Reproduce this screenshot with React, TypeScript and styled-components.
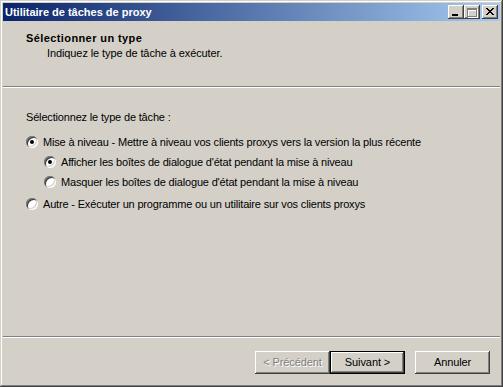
import React from 'react'
import styled, { createGlobalStyle } from 'styled-components'

const GlobalStyle = createGlobalStyle`
  html, body {
    margin: 0;
    padding: 0;
    background: #d4d0c8;
  }
  body {
    font-family: "Liberation Sans", Tahoma, Arial, sans-serif;
    font-size: 11px;
    color: #000;
  }
`

const Window = styled.div`
  box-sizing: border-box;
  width: 503px;
  height: 387px;
  padding: 3px;
  display: flex;
  flex-direction: column;
  background: #d4d0c8;
  box-shadow:
    inset -1px -1px #404040,
    inset 1px 1px #d4d0c8,
    inset -2px -2px #808080,
    inset 2px 2px #ffffff;
`

const TitleBar = styled.div`
  height: 18px;
  display: flex;
  align-items: center;
  justify-content: space-between;
  padding: 0 2px 0 2px;
  background: linear-gradient(to right, #0a246a, #a6caf0);
`

const TitleText = styled.span`
  color: #fff;
  font-weight: bold;
  font-size: 11px;
  line-height: 13px;
  white-space: nowrap;
`

const TitleButtons = styled.div`
  display: flex;
  align-items: center;
`

const CaptionButton = styled.div<{ $gap?: number }>`
  width: 16px;
  height: 14px;
  margin-left: ${({ $gap }) => $gap ?? 0}px;
  background: #d4d0c8;
  box-shadow:
    inset -1px -1px #404040,
    inset 1px 1px #ffffff,
    inset -2px -2px #808080;
  display: flex;
  align-items: flex-start;
  justify-content: flex-start;

  svg {
    display: block;
    shape-rendering: crispEdges;
  }
`

const Header = styled.div`
  height: 65px;
  box-sizing: border-box;
  padding: 11px 0 0 23px;
`

const HeaderTitle = styled.div`
  font-weight: bold;
  line-height: 13px;
  letter-spacing: 0.4px;
`

const HeaderSubtitle = styled.div`
  line-height: 13px;
  margin-top: 2px;
  padding-left: 21px;
  letter-spacing: -0.1px;
`

const Separator = styled.div`
  border-top: 1px solid #808080;
  border-bottom: 1px solid #ffffff;
  height: 0;
`

const Body = styled.div`
  flex: 1;
  box-sizing: border-box;
  padding: 23px 0 0 23px;
  display: flex;
  flex-direction: column;
  letter-spacing: -0.17px;
`

const Label = styled.div`
  line-height: 13px;
  margin-bottom: 8px;
`

const OptionRow = styled.label<{ $indent?: number; $space?: number }>`
  display: flex;
  align-items: center;
  height: 20px;
  padding-left: ${({ $indent }) => $indent ?? 0}px;
  margin-top: ${({ $space }) => $space ?? 0}px;
  line-height: 13px;
  white-space: nowrap;
`

const Radio = styled.span<{ $checked?: boolean }>`
  position: relative;
  width: 12px;
  height: 12px;
  flex: none;
  margin-right: 5px;
  border-radius: 50%;
  background: #fff;
  box-shadow:
    inset 1px 1px #808080,
    inset -1px -1px #ffffff,
    inset 2px 2px #404040,
    inset -2px -2px #d4d0c8;

  &::after {
    content: '';
    display: ${({ $checked }) => ($checked ? 'block' : 'none')};
    position: absolute;
    left: 4px;
    top: 4px;
    width: 4px;
    height: 4px;
    border-radius: 50%;
    background: #000;
  }
`

const Footer = styled.div`
  height: 46px;
  box-sizing: border-box;
  padding: 13px 10px 0 0;
  display: flex;
  justify-content: flex-end;
  align-items: flex-start;
`

const Button = styled.button<{ $default?: boolean; $gap?: number }>`
  width: 75px;
  height: 23px;
  margin: 0 0 0 ${({ $gap }) => $gap ?? 0}px;
  padding: 0;
  border: none;
  background: #d4d0c8;
  font-family: inherit;
  font-size: 11px;
  line-height: 13px;
  letter-spacing: -0.1px;
  color: #000;
  box-shadow: ${({ $default }) =>
    $default
      ? 'inset 0 0 0 1px #000, inset -2px -2px #404040, inset 2px 2px #ffffff, inset -3px -3px #808080'
      : 'inset -1px -1px #404040, inset 1px 1px #ffffff, inset -2px -2px #808080'};

  &:disabled {
    color: #808080;
    text-shadow: 1px 1px #ffffff;
  }
`

const CloseIcon = () => {
  const px: [number, number, number][] = [
    [0, 0, 2], [6, 0, 2],
    [1, 1, 2], [5, 1, 2],
    [2, 2, 4],
    [3, 3, 2],
    [2, 4, 4],
    [1, 5, 2], [5, 5, 2],
    [0, 6, 2], [6, 6, 2],
  ]
  return (
    <svg width="16" height="14" viewBox="0 0 16 14">
      {px.map(([x, y, w], i) => (
        <rect key={i} x={x + 4} y={y + 3} width={w} height={1} fill="#000" />
      ))}
    </svg>
  )
}

const MinimizeIcon = () => (
  <svg width="16" height="14" viewBox="0 0 16 14">
    <rect x="4" y="9" width="6" height="2" fill="#000" />
  </svg>
)

const MaximizeIcon = () => (
  <svg width="16" height="14" viewBox="0 0 16 14">
    <g fill="none">
      <path d="M4 3.5h9M4 4.5h9M3.5 3v9M12.5 3v9M4 11.5h9" stroke="#ffffff" transform="translate(1 1)" />
      <path d="M4 3.5h9M4 4.5h9M3.5 3v9M12.5 3v9M4 11.5h9" stroke="#808080" />
    </g>
  </svg>
)

const App: React.FC = () => {
  return (
    <>
      <GlobalStyle />
      <Window>
        <TitleBar>
          <TitleText>Utilitaire de tâches de proxy</TitleText>
          <TitleButtons>
            <CaptionButton>
              <MinimizeIcon />
            </CaptionButton>
            <CaptionButton>
              <MaximizeIcon />
            </CaptionButton>
            <CaptionButton $gap={2}>
              <CloseIcon />
            </CaptionButton>
          </TitleButtons>
        </TitleBar>
        <Header>
          <HeaderTitle>Sélectionner un type</HeaderTitle>
          <HeaderSubtitle>Indiquez le type de tâche à exécuter.</HeaderSubtitle>
        </Header>
        <Separator />
        <Body>
          <Label>Sélectionnez le type de tâche :</Label>
          <OptionRow>
            <Radio $checked />
            Mise à niveau - Mettre à niveau vos clients proxys vers la version la plus récente
          </OptionRow>
          <OptionRow $indent={18}>
            <Radio $checked />
            Afficher les boîtes de dialogue d'état pendant la mise à niveau
          </OptionRow>
          <OptionRow $indent={18}>
            <Radio />
            Masquer les boîtes de dialogue d'état pendant la mise à niveau
          </OptionRow>
          <OptionRow $space={2}>
            <Radio />
            Autre - Exécuter un programme ou un utilitaire sur vos clients proxys
          </OptionRow>
        </Body>
        <Separator />
        <Footer>
          <Button disabled>&lt; Précédent</Button>
          <Button $default>Suivant &gt;</Button>
          <Button $gap={10}>Annuler</Button>
        </Footer>
      </Window>
    </>
  )
}

export default App
